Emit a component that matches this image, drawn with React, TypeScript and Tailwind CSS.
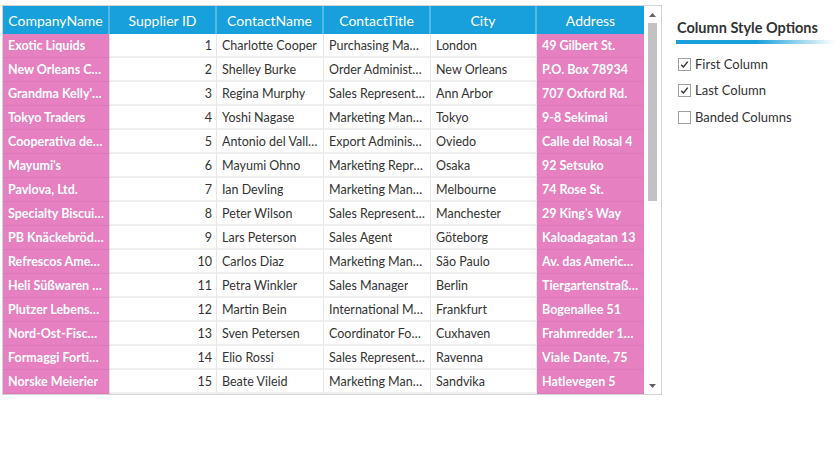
import React from "react";

type Row = {
  company: string;
  id: number;
  contact: string;
  title: string;
  city: string;
  address: string;
};

const rows: Row[] = [
  { company: "Exotic Liquids", id: 1, contact: "Charlotte Cooper", title: "Purchasing Manager", city: "London", address: "49 Gilbert St." },
  { company: "New Orleans Cajun Delights", id: 2, contact: "Shelley Burke", title: "Order Administrator", city: "New Orleans", address: "P.O. Box 78934" },
  { company: "Grandma Kelly's Homestead", id: 3, contact: "Regina Murphy", title: "Sales Representative", city: "Ann Arbor", address: "707 Oxford Rd." },
  { company: "Tokyo Traders", id: 4, contact: "Yoshi Nagase", title: "Marketing Manager", city: "Tokyo", address: "9-8 Sekimai" },
  { company: "Cooperativa de Quesos", id: 5, contact: "Antonio del Valle Saavedra", title: "Export Administrator", city: "Oviedo", address: "Calle del Rosal 4" },
  { company: "Mayumi's", id: 6, contact: "Mayumi Ohno", title: "Marketing Representative", city: "Osaka", address: "92 Setsuko" },
  { company: "Pavlova, Ltd.", id: 7, contact: "Ian Devling", title: "Marketing Manager", city: "Melbourne", address: "74 Rose St." },
  { company: "Specialty Biscuits, Ltd.", id: 8, contact: "Peter Wilson", title: "Sales Representative", city: "Manchester", address: "29 King's Way" },
  { company: "PB Knäckebröd AB", id: 9, contact: "Lars Peterson", title: "Sales Agent", city: "Göteborg", address: "Kaloadagatan 13" },
  { company: "Refrescos Americanas LTDA", id: 10, contact: "Carlos Diaz", title: "Marketing Manager", city: "São Paulo", address: "Av. das Americanas 12.890" },
  { company: "Heli Süßwaren GmbH & Co. KG", id: 11, contact: "Petra Winkler", title: "Sales Manager", city: "Berlin", address: "Tiergartenstraße 5" },
  { company: "Plutzer Lebensmittelgroßmärkte AG", id: 12, contact: "Martin Bein", title: "International Marketing Mgr.", city: "Frankfurt", address: "Bogenallee 51" },
  { company: "Nord-Ost-Fisch Handelsgesellschaft mbH", id: 13, contact: "Sven Petersen", title: "Coordinator Foreign Markets", city: "Cuxhaven", address: "Frahmredder 112a" },
  { company: "Formaggi Fortini s.r.l.", id: 14, contact: "Elio Rossi", title: "Sales Representative", city: "Ravenna", address: "Viale Dante, 75" },
  { company: "Norske Meierier", id: 15, contact: "Beate Vileid", title: "Marketing Manager", city: "Sandvika", address: "Hatlevegen 5" },
];

const headers = ["CompanyName", "Supplier ID", "ContactName", "ContactTitle", "City", "Address"];

const font = { fontFamily: 'Lato, "Noto Sans", sans-serif' };

const Check = ({ checked, label }: { checked: boolean; label: string }) => (
  <div className="flex items-center h-[26.5px]">
    <div className="w-[13px] h-[13px] border border-[#a0a0a0] bg-white flex items-center justify-center">
      {checked && (
        <svg width="9" height="9" viewBox="0 0 9 9">
          <path d="M1.2 4.8 L3.4 7 L7.8 1.6" fill="none" stroke="#333" strokeWidth="1.4" />
        </svg>
      )}
    </div>
    <span className="ml-[4px] text-[13px] text-[#333]">{label}</span>
  </div>
);

const App: React.FC = () => {
  return (
    <div className="w-[840px] h-[450px] bg-white relative" style={font}>
      <div className="flex pt-[5px] pl-[2px]">
        {/* Grid */}
        <div className="w-[660px] h-[390px] border border-[#d4d4d4] flex">
          <div className="w-[641px] flex flex-col">
            <div className="grid grid-cols-[107px_107px_107px_107px_106px_107px] h-[28px] bg-[#17a0db]">
              {headers.map((h, i) => (
                <div
                  key={h}
                  className={`flex items-center justify-center text-white text-[14px] ${i < 5 ? "border-r-2 border-[#53b8e4]" : ""}`}
                >
                  {h}
                </div>
              ))}
            </div>
            {rows.map((r) => (
              <div key={r.id} className="grid grid-cols-[107px_107px_107px_107px_106px_107px] h-[24px] text-[12.5px]">
                <div className="bg-[#e680c0] border-b border-[#dd79b7] border-r border-r-[#e0e0e0] px-[5px] pt-[2px] flex items-center text-white font-bold min-w-0">
                  <span className="truncate">{r.company}</span>
                </div>
                <div className="border-b-2 border-[#efefef] border-r border-r-[#e6e6e6] pr-[4px] pt-[2px] flex items-center justify-end text-[#333]">
                  {r.id}
                </div>
                <div className="border-b-2 border-[#efefef] border-r border-r-[#e6e6e6] px-[5px] pt-[2px] flex items-center text-[#333] min-w-0">
                  <span className="truncate">{r.contact}</span>
                </div>
                <div className="border-b-2 border-[#efefef] border-r border-r-[#e6e6e6] px-[5px] pt-[2px] flex items-center text-[#333] min-w-0">
                  <span className="truncate">{r.title}</span>
                </div>
                <div className="border-b-2 border-[#efefef] border-r border-r-[#e6e6e6] px-[5px] pt-[2px] flex items-center text-[#333] min-w-0">
                  <span className="truncate">{r.city}</span>
                </div>
                <div className="bg-[#e680c0] border-b border-[#dd79b7] px-[5px] pt-[2px] flex items-center text-white font-bold min-w-0">
                  <span className="truncate">{r.address}</span>
                </div>
              </div>
            ))}
          </div>
          {/* Scrollbar */}
          <div className="w-[17px] flex flex-col items-center bg-white">
            <div className="h-[17px] flex items-center justify-center">
              <svg width="7" height="4" viewBox="0 0 7 4">
                <path d="M0 4 L3.5 0 L7 4 Z" fill="#606060" />
              </svg>
            </div>
            <div className="w-[9px] h-[178px] bg-[#c2c2c2]" />
            <div className="flex-1" />
            <div className="h-[17px] flex items-center justify-center">
              <svg width="7" height="4" viewBox="0 0 7 4">
                <path d="M0 0 L7 0 L3.5 4 Z" fill="#606060" />
              </svg>
            </div>
          </div>
        </div>

        {/* Options panel */}
        <div className="ml-[14px] pt-[13px] w-[159px]">
          <div className="text-[14.5px] font-bold text-[#333] pl-[1px] leading-[20px]">Column Style Options</div>
          <div className="h-[4px] mt-[2px] bg-gradient-to-r from-[#17a0db] via-[#17a0db] to-transparent" />
          <div className="mt-[7px] pl-[2px]">
            <Check checked label="First Column" />
            <Check checked label="Last Column" />
            <Check checked={false} label="Banded Columns" />
          </div>
        </div>
      </div>
    </div>
  );
};

export default App;
